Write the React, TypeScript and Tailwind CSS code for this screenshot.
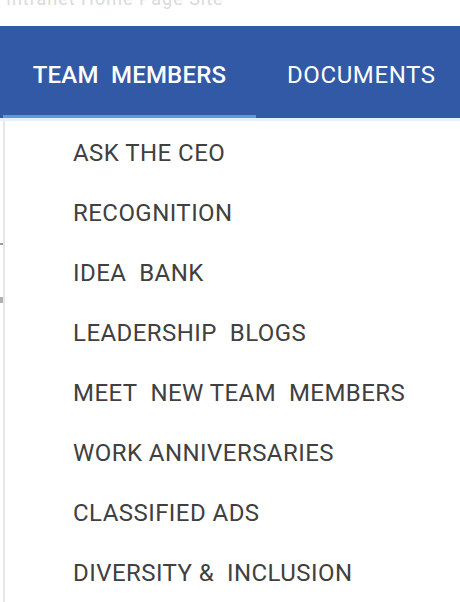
import React from 'react';

const menuItems = [
  'ASK THE CEO',
  'RECOGNITION',
  'IDEA\u00a0\u00a0BANK',
  'LEADERSHIP\u00a0\u00a0BLOGS',
  'MEET\u00a0\u00a0NEW TEAM\u00a0\u00a0MEMBERS',
  'WORK ANNIVERSARIES',
  'CLASSIFIED ADS',
  'DIVERSITY &\u00a0\u00a0INCLUSION',
];

export default function App() {
  return (
    <div className="w-[460px] h-[602px] overflow-hidden bg-white font-['Roboto',sans-serif]">
      {/* faded header text, cut off at the top */}
      <div className="h-[26px] overflow-hidden">
        <div className="-mt-[15px] pl-[6px] text-[18px] tracking-[1px] text-[#dadada] whitespace-nowrap">
          Intranet Home Page Site
        </div>
      </div>

      {/* nav bar */}
      <div className="h-[92px] bg-[#3259a5] flex items-stretch">
        <div className="ml-[3px] w-[253px] flex flex-col">
          <div className="flex-1 flex items-center justify-center pt-[8px] text-[24px] font-medium tracking-[0.2px] text-white whitespace-nowrap">
            TEAM&nbsp;&nbsp;MEMBERS
          </div>
          <div className="h-[3px] bg-[#5b9bd8]" />
        </div>
        <div className="flex-1 flex items-center pl-[31px] pt-[6px] text-[24px] tracking-[0.6px] text-white whitespace-nowrap">
          DOCUMENTS
        </div>
      </div>
      <div className="h-[3px] bg-[#e4f1fb]" />

      {/* dropdown */}
      <div className="relative">
        <div className="absolute left-0 top-[122px] w-[3px] h-[2px] bg-[#9a9a9a]" />
        <div className="absolute left-0 top-[176px] w-[3px] h-[6px] bg-[#b0b0b0]" />
        <div className="ml-[3px] border-l-[2px] border-[#e6e6e6] pt-[2px] min-h-[481px]">
          {menuItems.map((item) => (
            <div
              key={item}
              className="h-[60px] flex items-center pl-[68px] text-[24px] tracking-[0.45px] text-[#404040] whitespace-nowrap"
            >
              {item}
            </div>
          ))}
        </div>
      </div>
    </div>
  );
}
